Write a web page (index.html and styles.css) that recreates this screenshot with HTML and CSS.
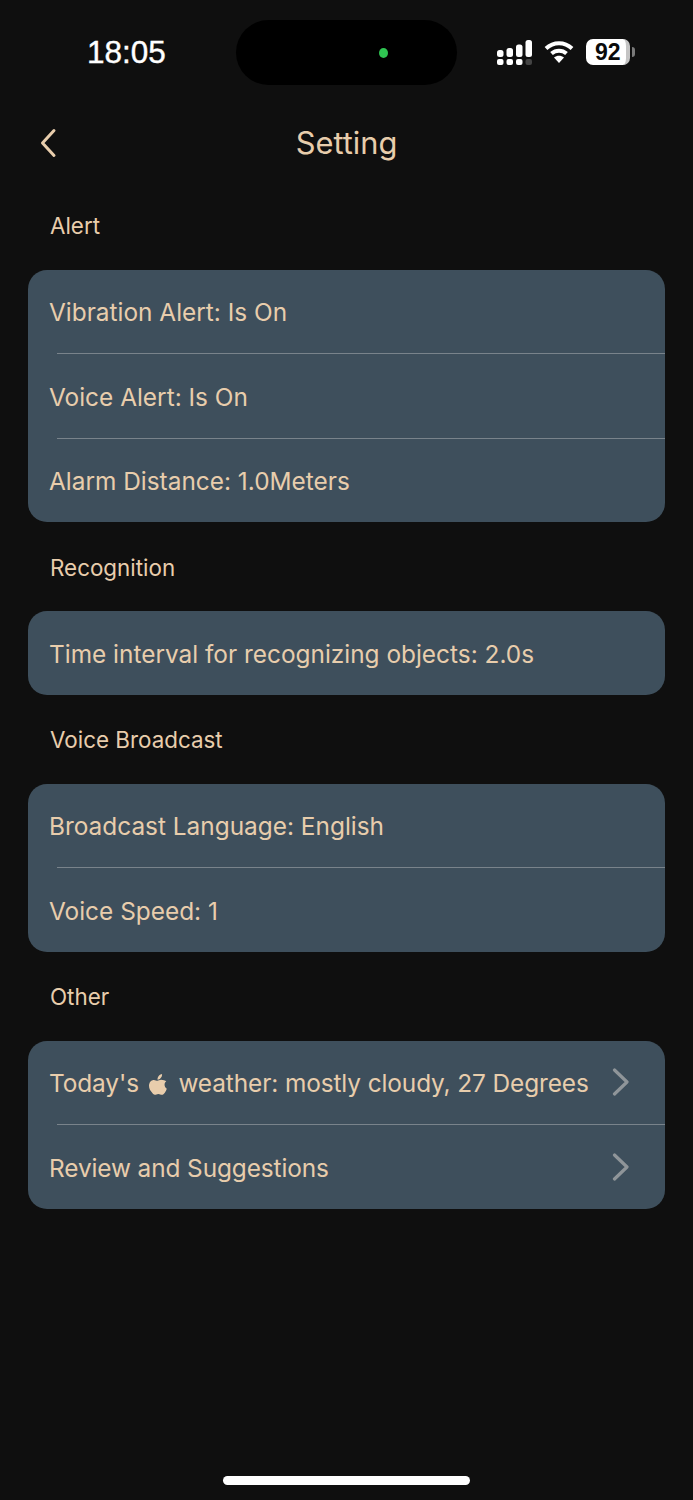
FILE: index.html
```html
<!DOCTYPE html>
<html lang="en">
<head>
<meta charset="utf-8">
<title>Setting</title>
<link rel="stylesheet" href="styles.css">
</head>
<body>
<div class="screen">
  <header class="status">
    <span class="time">18:05</span>
    <div class="island"><span class="dot"></span></div>
    <div class="indicators">
      <svg class="signal" width="36" height="25" viewBox="0 0 36 25">
        <g fill="#fff">
          <rect x="0" y="10" width="6.500" height="7" rx="2.500"/><rect x="9.500" y="8" width="6.500" height="9" rx="2.500"/><rect x="19" y="4.500" width="6.500" height="12.500" rx="2.500"/><rect x="28.500" y="0" width="6.500" height="17" rx="2.500"/>
          <rect x="0" y="19" width="6.500" height="6" rx="2"/><rect x="9.500" y="19" width="6.500" height="6" rx="2"/><rect x="19" y="19" width="6.500" height="6" rx="2"/>
        </g>
        <rect x="28.500" y="19" width="6.500" height="6" rx="2" fill="#444"/>
      </svg>
      <svg class="wifi" width="30" height="24" viewBox="0 0 30 24">
        <g fill="none" stroke="#fff" stroke-width="4">
          <path d="M2 9.500C9.500 2.500 20.500 2.500 28 9.500"/>
          <path d="M7.500 14.500C11.800 10.700 18.200 10.700 22.500 14.500"/>
        </g>
        <path d="M15 24l-5-5.500c3-2.300 7-2.300 10 0z" fill="#fff"/>
      </svg>
      <div class="battery"><span class="level">92</span></div>
      <span class="cap"></span>
    </div>
  </header>

  <nav class="nav">
    <svg class="back" width="18" height="30" viewBox="0 0 18 30"><path d="M15 2.500L3.500 15L15 27.500" fill="none" stroke="#e8cdac" stroke-width="3" stroke-linecap="round" stroke-linejoin="round"/></svg>
    <h1 class="title">Setting</h1>
  </nav>

  <main class="content">
    <h2 class="section">Alert</h2>
    <section class="card">
      <div class="row">Vibration Alert: Is On</div>
      <div class="sep"></div>
      <div class="row">Voice Alert: Is On</div>
      <div class="sep"></div>
      <div class="row">Alarm Distance: 1.0Meters</div>
    </section>

    <h2 class="section">Recognition</h2>
    <section class="card">
      <div class="row">Time interval for recognizing objects: 2.0s</div>
    </section>

    <h2 class="section">Voice Broadcast</h2>
    <section class="card">
      <div class="row">Broadcast Language: English</div>
      <div class="sep"></div>
      <div class="row">Voice Speed: 1</div>
    </section>

    <h2 class="section">Other</h2>
    <section class="card">
      <div class="row row-link">
        <span class="label">Today's<svg class="apple" width="18" height="21" viewBox="0 0 20 23" preserveAspectRatio="none"><path fill="#e8cdac" d="M14.500 0c.2 2-.6 3.500-1.500 4.500-1 1.100-2.200 1.800-3.500 1.700-.2-1.800.6-3.300 1.500-4.300 1-1.100 2.500-1.800 3.500-1.900zM19.200 8c-1.300 1-1.900 2.200-1.900 3.900 0 2 1 3.400 2.500 4.200-.5 1.600-1.200 3-2.200 4.300-1 1.400-2 2.300-3.300 2.300-1.400 0-2-.9-3.900-.9-1.900 0-2.500.9-3.900.9-1.300 0-2.300-1-3.400-2.600C1.100 18.300 0 15.600 0 13c0-4.200 2.700-6.500 5.500-6.500 1.500 0 2.900 1 3.900 1 1 0 2.200-1.100 4.100-1.100 2.300 0 4.400.8 5.700 1.600z"/></svg>weather: mostly cloudy, 27 Degrees</span>
        <svg class="chev" width="18" height="28" viewBox="0 0 18 28"><path d="M2.500 2L15 14L2.500 26" fill="none" stroke="#8f9599" stroke-width="3.200" stroke-linecap="round" stroke-linejoin="round"/></svg>
      </div>
      <div class="sep"></div>
      <div class="row row-link">
        <span class="label">Review and Suggestions</span>
        <svg class="chev" width="18" height="28" viewBox="0 0 18 28"><path d="M2.500 2L15 14L2.500 26" fill="none" stroke="#8f9599" stroke-width="3.200" stroke-linecap="round" stroke-linejoin="round"/></svg>
      </div>
    </section>
  </main>

  <div class="home-wrap"><div class="home"></div></div>
</div>
</body>
</html>
```
FILE: styles.css
```css
* { box-sizing: border-box; }
html, body { margin: 0; padding: 0; background: #0f0f0f; }
body { font-family: Inter, "Liberation Sans", Arial, sans-serif; color: #e8cdac; }
.screen { width: 693px; height: 1500px; display: flex; flex-direction: column; overflow: hidden; }

.status { height: 100px; padding: 20px 0 0 87px; display: flex; align-items: flex-start; }
.time { flex: none; width: 149px; margin-top: 14px; font-family: "Liberation Sans", Arial, sans-serif; font-size: 31.500px; line-height: 36px; color: #fff; -webkit-text-stroke: 0.4px #fff; }
.island { flex: none; width: 221px; height: 65px; border-radius: 33px; background: #000; display: flex; align-items: center; padding-left: 143px; }
.dot { width: 9px; height: 10px; border-radius: 50%; background: #2fc552; }
.indicators { flex: none; margin-left: 40px; margin-top: 19px; display: flex; align-items: center; }
.signal { display: block; }
.wifi { display: block; margin-left: 11px; margin-top: -2px; }
.battery { width: 44px; height: 26px; margin-left: 12px; border-radius: 7px; background: #fff; display: flex; align-items: center; padding-left: 9px; border-right: 4px solid #c4c4c4; }
.level { font-family: "Liberation Sans", Arial, sans-serif; font-size: 23px; line-height: 26px; font-weight: 700; color: #0a0a0a; }
.cap { width: 3px; height: 10px; margin-left: 2px; border-radius: 0 3px 3px 0; background: #7a7a7a; }

.nav { height: 81px; padding-left: 39px; display: flex; align-items: center; position: relative; margin-top: 2px; margin-bottom: -2.500px; }
.back { display: block; }
.title { position: absolute; left: 0; right: 0; top: 0; margin: 0; text-align: center; font-size: 30.800px; line-height: 81px; font-weight: 400; color: #e8cdac; }

.content { padding: 0 28.500px 0 28px; }
.section { margin: 0; height: 89px; padding-left: 22px; padding-top: 27.500px; font-size: 22.400px; line-height: 36px; font-weight: 400; color: #e8cdac; }
.card { background: #3e4f5c; border-radius: 19px; overflow: hidden; }
.row { height: 83.500px; padding-left: 21px; padding-top: 2px; display: flex; align-items: center; font-size: 24.400px; color: #e8cdac; }
.sep { height: 1px; margin-left: 28.500px; background: #79838b; }
.row-link { justify-content: space-between; padding-right: 35px; }
.label { letter-spacing: -0.1px; }
.apple { vertical-align: -3px; margin: 0 11.500px 0 10px; }
.chev { display: block; margin-top: -2px; }

.home-wrap { margin-top: auto; height: 24px; display: flex; justify-content: center; }
.home { width: 247px; height: 9px; border-radius: 5px; background: #fff; }
```
